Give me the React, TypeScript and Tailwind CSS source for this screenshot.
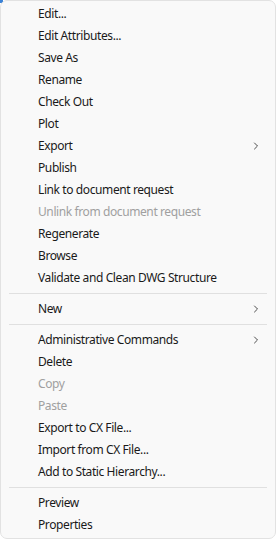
import { ChevronRight } from "lucide-react"

type Item = { label: string; disabled?: boolean; submenu?: boolean } | "sep"

const ITEMS: Item[] = [
  { label: "Edit..." },
  { label: "Edit Attributes..." },
  { label: "Save As" },
  { label: "Rename" },
  { label: "Check Out" },
  { label: "Plot" },
  { label: "Export", submenu: true },
  { label: "Publish" },
  { label: "Link to document request" },
  { label: "Unlink from document request", disabled: true },
  { label: "Regenerate" },
  { label: "Browse" },
  { label: "Validate and Clean DWG Structure" },
  "sep",
  { label: "New", submenu: true },
  "sep",
  { label: "Administrative Commands", submenu: true },
  { label: "Delete" },
  { label: "Copy", disabled: true },
  { label: "Paste", disabled: true },
  { label: "Export to CX File..." },
  { label: "Import from CX File..." },
  { label: "Add to Static Hierarchy..." },
  "sep",
  { label: "Preview" },
  { label: "Properties" },
]

export default function App() {
  return (
    <div className="relative w-[276px] h-[539px] bg-white">
      <div className="absolute left-0 top-0 w-[3px] h-[3px] bg-[#3b82d6]" />
      <div
        className="relative flex flex-col w-full h-full py-[2px] rounded-[7px] border border-[#e2e2e2] bg-[#f9f9f9] text-[12px] tracking-[-0.4px] text-black"
        style={{ fontFamily: '"Segoe UI", "Noto Sans", "Open Sans", sans-serif' }}>
        {ITEMS.map((item, i) =>
          item === "sep" ? (
            <div key={i} className="h-[9px] shrink-0 flex items-center px-2">
              <div className="h-px w-full bg-[#e0e0e0]" />
            </div>
          ) : (
            <div
              key={i}
              className={
                "h-[22px] shrink-0 flex items-center pl-[37px] pr-[13px] leading-none " +
                (item.disabled ? "text-[#a0a0a0]" : "text-[#1a1a1a]")
              }>
              <span className="flex-1 whitespace-nowrap">{item.label}</span>
              {item.submenu && <ChevronRight className="size-3 text-[#333]" strokeWidth={1.75} />}
            </div>
          ),
        )}
      </div>
    </div>
  )
}
